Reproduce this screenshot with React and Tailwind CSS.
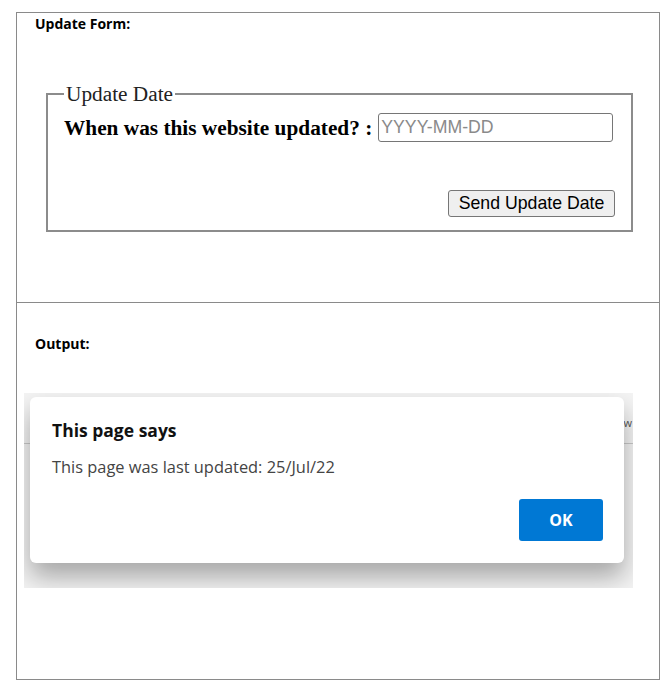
export default function App() {
  return (
    <main className="w-[662px] h-[700px] bg-white pt-[12px] pl-[16px]">
      <div className="w-[644px] border border-[#8a8a8a]">
        {/* Update form */}
        <section className="h-[290px] border-b border-[#8a8a8a] pl-[18px] pt-[1px]">
          <h2 className="font-['Open_Sans',sans-serif] font-bold text-[14px] leading-[19px] text-black">
            Update Form:
          </h2>

          <fieldset className="mt-[49px] ml-[11px] w-[587px] border-2 border-[#8c8c8c] px-4 pb-[13px] font-['Liberation_Serif',serif] text-[21.3px] text-[#222]">
            <legend className="px-[2px] leading-[24px]">Update Date</legend>
            <div className="flex items-center gap-[6px] pt-[7px]">
              <label className="font-bold text-black leading-[24px]">When was this website updated? :</label>
              <input
                type="text"
                placeholder="YYYY-MM-DD"
                className="w-[235px] h-[29px] border border-[#767676] rounded-[3px] bg-white px-[2px] font-['Liberation_Sans',sans-serif] text-[17.7px] placeholder:text-[#8a8a8a] outline-none"
              />
            </div>
            <div className="flex justify-end mt-[48px]">
              <button className="h-[27px] w-[167px] border border-[#767676] rounded-[3px] bg-[#efefef] font-['Liberation_Sans',sans-serif] text-[17.7px] leading-none text-black">
                Send Update Date
              </button>
            </div>
          </fieldset>
        </section>

        {/* Output */}
        <section className="h-[376px] pl-[18px] pt-[31px]">
          <h2 className="font-['Open_Sans',sans-serif] font-bold text-[14px] leading-[19px] text-black">
            Output:
          </h2>

          <div className="relative mt-[40px] -ml-[11px] w-[609px] h-[195px] overflow-hidden bg-[#f4f4f4]">
            <div className="flex justify-end h-[50px] items-center pt-[8px] pr-[1px]">
              <span className="font-['Open_Sans',sans-serif] text-[11px] leading-none text-[#555]">w</span>
            </div>
            <div className="h-px bg-[#c9c9c9]" />

            <div className="absolute left-[6px] top-[4px] w-[594px] h-[166px] rounded-[6px] bg-white shadow-[0_14px_26px_rgba(0,0,0,0.32)] pl-[22px] pr-[21px] pt-[22px] font-['Open_Sans',sans-serif]">
              <p className="font-bold text-[17.5px] leading-[23px] text-[#111]">This page says</p>
              <p className="mt-[14px] text-[16.4px] leading-[22px] text-[#444]">
                This page was last updated: 25/Jul/22
              </p>
              <div className="flex justify-end mt-[21px]">
                <button className="w-[84px] h-[42px] rounded-[3px] bg-[#0078d4] text-white font-bold text-[16px]">
                  OK
                </button>
              </div>
            </div>
          </div>
        </section>
      </div>
    </main>
  );
}
